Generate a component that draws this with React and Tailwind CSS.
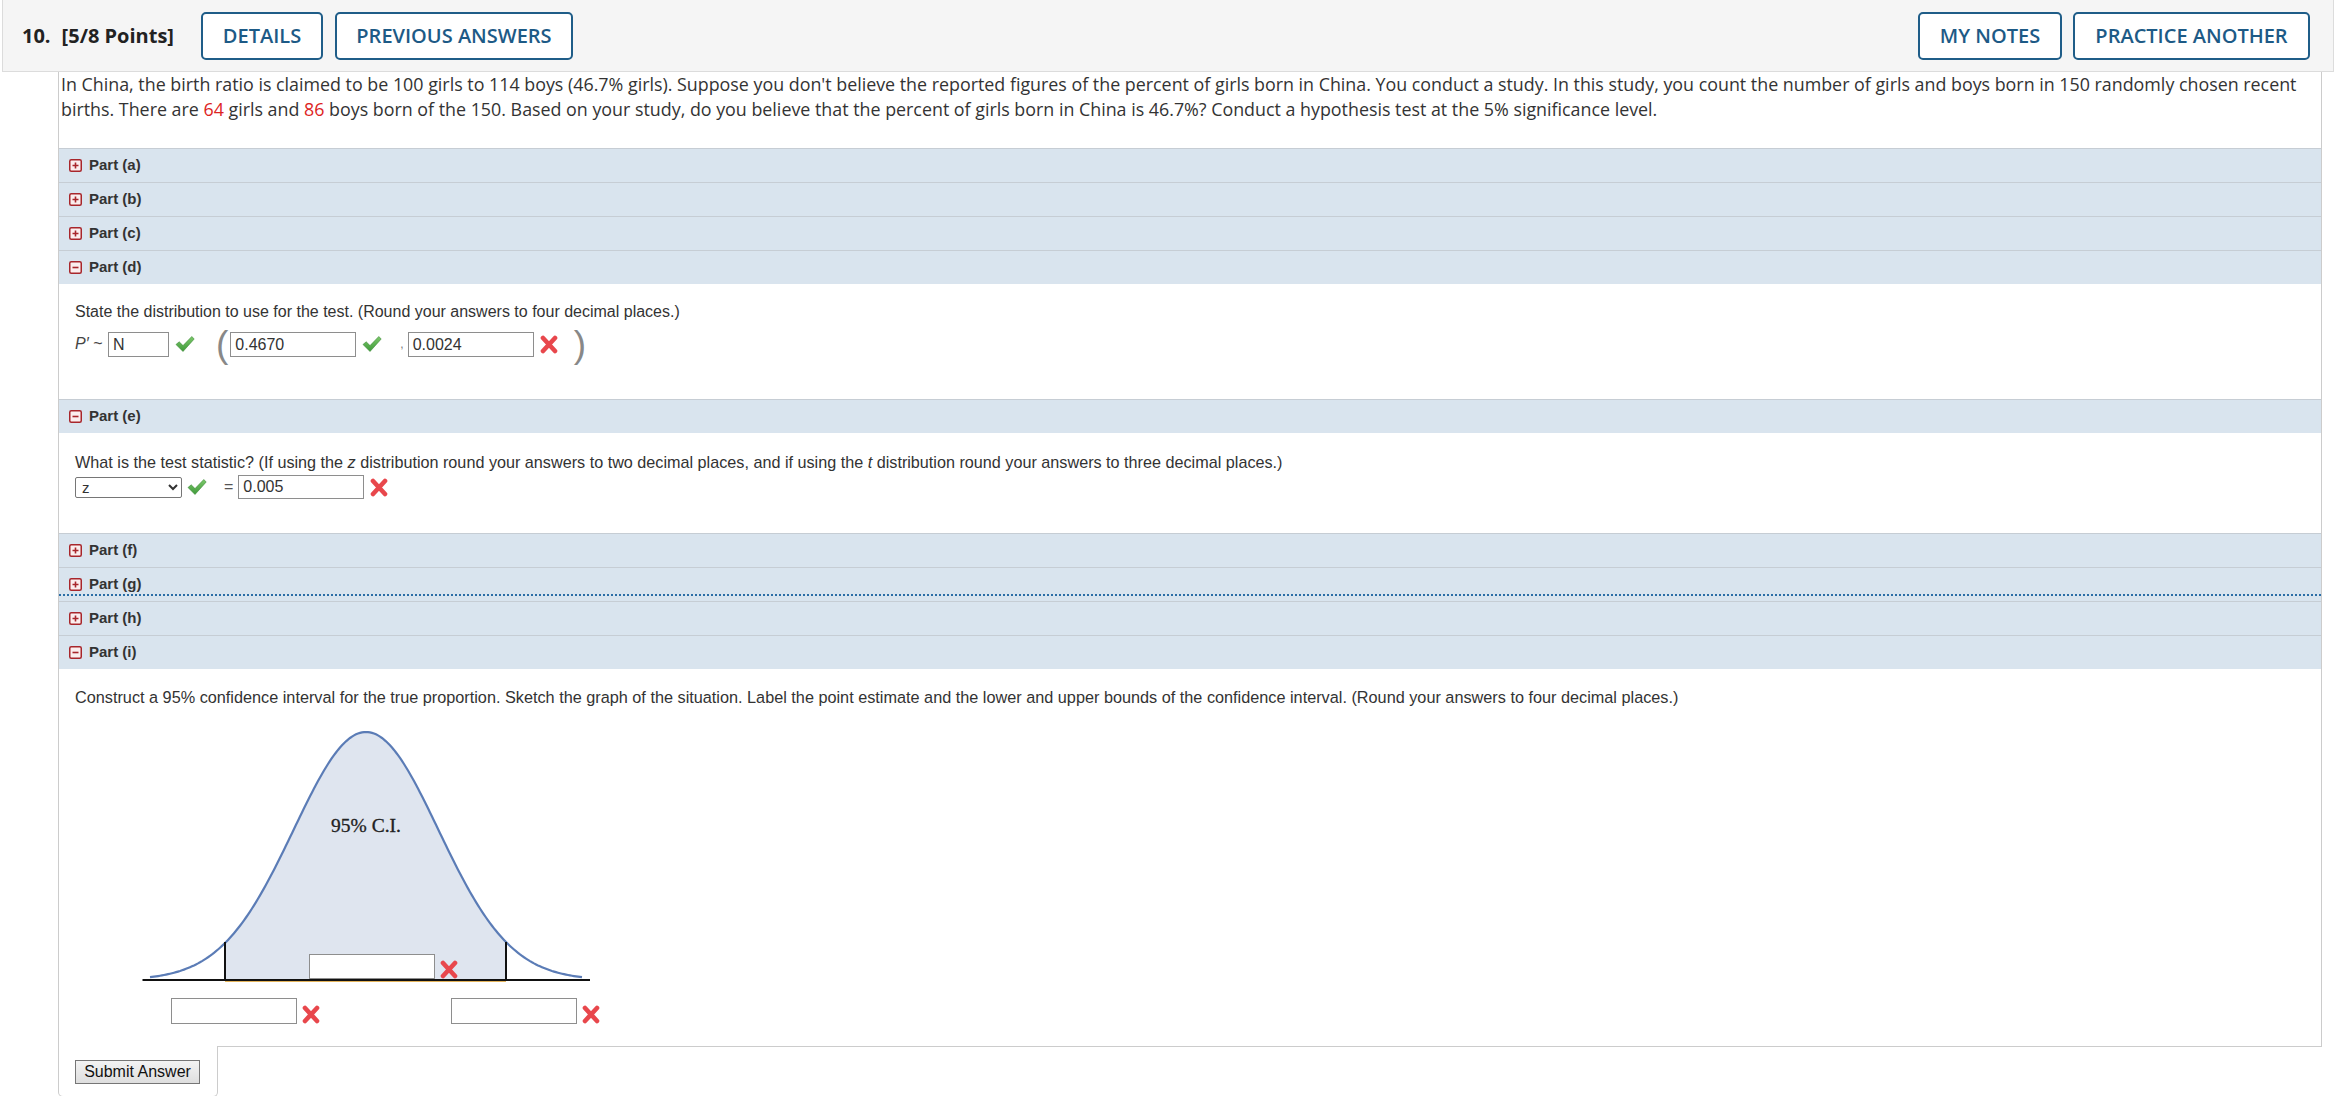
import React from "react";

const Check = () => (
  <svg width="20" height="18" viewBox="0 0 20 18" className="shrink-0">
    <defs>
      <linearGradient id="cg" x1="0" y1="0" x2="0" y2="1">
        <stop offset="0" stopColor="#7cc86a" />
        <stop offset="1" stopColor="#3f9a3a" />
      </linearGradient>
    </defs>
    <path d="M1 9.5 L4.2 6.8 L8 10.6 L16.8 1.5 L19.2 4 L8 16.5 Z" fill="url(#cg)" stroke="#3d8a38" strokeWidth="0.6" strokeLinejoin="round" />
  </svg>
);

const Cross = () => (
  <svg width="18" height="19" viewBox="0 0 18 19" className="shrink-0">
    <path d="M3 3 L15 16 M15 3 L3 16" stroke="#e8474c" strokeWidth="4.6" strokeLinecap="round" />
  </svg>
);

const PartIcon = ({ open }) => (
  <svg width="13" height="13" viewBox="0 0 13 13" className="shrink-0">
    <rect x="0.75" y="0.75" width="11.5" height="11.5" rx="1.5" fill="#fbeeee" stroke="#a8262b" strokeWidth="1.5" />
    <path d={open ? "M3.5 6.5 H9.5" : "M3.5 6.5 H9.5 M6.5 3.5 V9.5"} stroke="#a8262b" strokeWidth="1.6" />
  </svg>
);

const Row = ({ label, open, dotted }) => (
  <div className="h-[34px] border-t border-[#c6cdd4] bg-[#d9e4ee] relative">
    <div className="flex items-center gap-[7px] pl-[10px] h-full">
      <PartIcon open={open} />
      <span className="font-['Liberation_Sans',Arial,sans-serif] font-bold text-[15px] text-[#333]">Part ({label})</span>
    </div>
    {dotted && <div className="absolute left-0 right-0 bottom-[5px] border-b-2 border-dotted border-[#2b6ea6]" />}
  </div>
);

const Field = ({ w, h = 25, children }) => (
  <div className="border border-[#8e8e8e] bg-white text-[16px] text-[#333] pl-[4px] shrink-0" style={{ width: w, height: h, lineHeight: `${h - 2}px` }}>
    {children}
  </div>
);

function Curve() {
  const base = 261;
  const H = 248;
  const s2 = 2 * 5224;
  const f = (x) => base - H * Math.exp(-((x - 235) ** 2) / s2);
  const pts = [];
  for (let x = 19; x <= 451; x += 2) pts.push(`${x},${f(x).toFixed(2)}`);
  const fill = [`94,${base}`];
  for (let x = 94; x <= 375; x += 2) fill.push(`${x},${f(x).toFixed(2)}`);
  fill.push(`375,${f(375).toFixed(2)}`, `375,${base}`);
  return (
    <svg width="480" height="305" viewBox="0 0 480 305" className="block">
      <polygon points={fill.join(" ")} fill="#dfe5ef" />
      <polyline points={pts.join(" ")} fill="none" stroke="#5b7cb6" strokeWidth="2.2" />
      <line x1="11.5" y1="261" x2="459" y2="261" stroke="#111" strokeWidth="2" />
      <line x1="94" y1="261" x2="375" y2="261" stroke="#e3b35a" strokeWidth="1" transform="translate(0,1.5)" />
      <line x1="94" y1="223" x2="94" y2="262" stroke="#111" strokeWidth="2" />
      <line x1="375" y1="223" x2="375" y2="262" stroke="#111" strokeWidth="2" />
      <text x="235" y="113" textAnchor="middle" fontFamily="'Liberation Serif', 'Times New Roman', serif" fontSize="19.5" fill="#222" stroke="#222" strokeWidth="0.3">95% C.I.</text>
    </svg>
  );
}

export default function App() {
  const sans = "font-['Liberation_Sans',Arial,sans-serif]";
  return (
    <div className="w-[2334px] h-[1096px] overflow-hidden bg-white">
      {/* header */}
      <div className="h-[72px] ml-[2px] border border-t-0 border-[#dcdcdc] bg-[#f5f5f5] flex items-center pl-[19px] pr-[23px] font-['Open_Sans',sans-serif]">
        <div className="text-[20px] font-bold text-[#222] flex items-center">
          <span>10.</span>
          <span className="ml-[11px]">[5/8 Points]</span>
        </div>
        <button className="ml-[27px] w-[122px] h-[48px] border-2 border-[#1f5d88] rounded-[5px] bg-white text-[#1d5a86] text-[20px] font-semibold">DETAILS</button>
        <button className="ml-[12px] w-[238px] h-[48px] border-2 border-[#1f5d88] rounded-[5px] bg-white text-[#1d5a86] text-[20px] font-semibold">PREVIOUS ANSWERS</button>
        <div className="flex-1" />
        <button className="w-[144px] h-[48px] border-2 border-[#1f5d88] rounded-[5px] bg-white text-[#1d5a86] text-[20px] font-semibold">MY NOTES</button>
        <button className="ml-[11px] w-[237px] h-[48px] border-2 border-[#1f5d88] rounded-[5px] bg-white text-[#1d5a86] text-[20px] font-semibold">PRACTICE ANOTHER</button>
      </div>

      <div className="ml-[58px] w-[2264px]">
        <div className="border-x border-[#cccccc]">
          {/* intro */}
          <div className="h-[76px] pl-[2px] font-['Open_Sans',sans-serif] text-[17.85px] leading-[25px] text-[#333]">
            <div className="whitespace-nowrap">In China, the birth ratio is claimed to be 100 girls to 114 boys (46.7% girls). Suppose you don't believe the reported figures of the percent of girls born in China. You conduct a study. In this study, you count the number of girls and boys born in 150 randomly chosen recent</div>
            <div className="whitespace-nowrap">births. There are <span className="text-[#dd2424]">64</span> girls and <span className="text-[#dd2424]">86</span> boys born of the 150. Based on your study, do you believe that the percent of girls born in China is 46.7%? Conduct a hypothesis test at the 5% significance level.</div>
          </div>

          <Row label="a" />
          <Row label="b" />
          <Row label="c" />
          <Row label="d" open />
          <div className={"h-[115px] pt-[18px] pl-[16px] text-[#333] " + sans}>
            <div className="text-[16px] leading-[20px]">State the distribution to use for the test. (Round your answers to four decimal places.)</div>
            <div className="mt-[7px] h-[30px] flex items-center">
              <span className="text-[16px] italic text-[#444] w-[33px]">P′ ~</span>
              <Field w="61px">N</Field>
              <span className="ml-[6px]"><Check /></span>
              <span className="ml-[21px] text-[37px] leading-[37px] text-[#888]">(</span>
              <span className="ml-[2px]"><Field w="126px">0.4670</Field></span>
              <span className="ml-[6px]"><Check /></span>
              <span className="ml-[18px] text-[12px] text-[#777]">,</span>
              <span className="ml-[4px]"><Field w="126px">0.0024</Field></span>
              <span className="ml-[6px]"><Cross /></span>
              <span className="ml-[16px] text-[37px] leading-[37px] text-[#888]">)</span>
            </div>
          </div>

          <Row label="e" open />
          <div className={"h-[100px] pt-[19px] pl-[16px] text-[#333] " + sans}>
            <div className="text-[16.2px] leading-[20px]">What is the test statistic? (If using the <i>z</i> distribution round your answers to two decimal places, and if using the <i>t</i> distribution round your answers to three decimal places.)</div>
            <div className="mt-[3px] h-[24px] flex items-center">
              <select className="w-[107px] h-[21px] border border-[#767676] rounded-[2px] bg-white text-[15px] text-[#333] pl-[2px]" defaultValue="z">
                <option value="z">z</option>
              </select>
              <span className="ml-[5px]"><Check /></span>
              <span className="ml-[17px] text-[16px] text-[#555]">=</span>
              <span className="ml-[5px]"><Field w="126px" h={24}>0.005</Field></span>
              <span className="ml-[6px]"><Cross /></span>
            </div>
          </div>

          <Row label="f" />
          <Row label="g" dotted />
          <Row label="h" />
          <Row label="i" open />
          <div className={"h-[377px] pt-[18px] pl-[16px] text-[#333] " + sans}>
            <div className="text-[16.25px] leading-[20px]">Construct a 95% confidence interval for the true proportion. Sketch the graph of the situation. Label the point estimate and the lower and upper bounds of the confidence interval. (Round your answers to four decimal places.)</div>
            <div className="relative ml-[56px] mt-[12px] w-[480px] h-[305px]">
              <Curve />
              <div className="absolute left-[178px] top-[235px] w-[126px] h-[25px] border border-[#8e8e8e] bg-white" />
              <div className="absolute left-[309px] top-[241px]"><Cross /></div>
              <div className="absolute left-[40px] top-[279px] w-[126px] h-[26px] border border-[#8e8e8e] bg-white" />
              <div className="absolute left-[171px] top-[286px]"><Cross /></div>
              <div className="absolute left-[320px] top-[279px] w-[126px] h-[26px] border border-[#8e8e8e] bg-white" />
              <div className="absolute left-[451px] top-[286px]"><Cross /></div>
            </div>
          </div>
        </div>
        <div className="flex h-[51px]">
          <div className="w-[160px] border-l border-r border-b border-[#cccccc] rounded-b-[5px] pl-[16px] pt-[13px]">
            <button className={"w-[125px] h-[24px] border border-[#767676] bg-gradient-to-b from-[#f3f3f3] to-[#dedede] text-[16px] text-[#111] leading-[22px] " + sans}>Submit Answer</button>
          </div>
          <div className="flex-1 border-t border-[#cccccc]" />
        </div>
      </div>
    </div>
  );
}
